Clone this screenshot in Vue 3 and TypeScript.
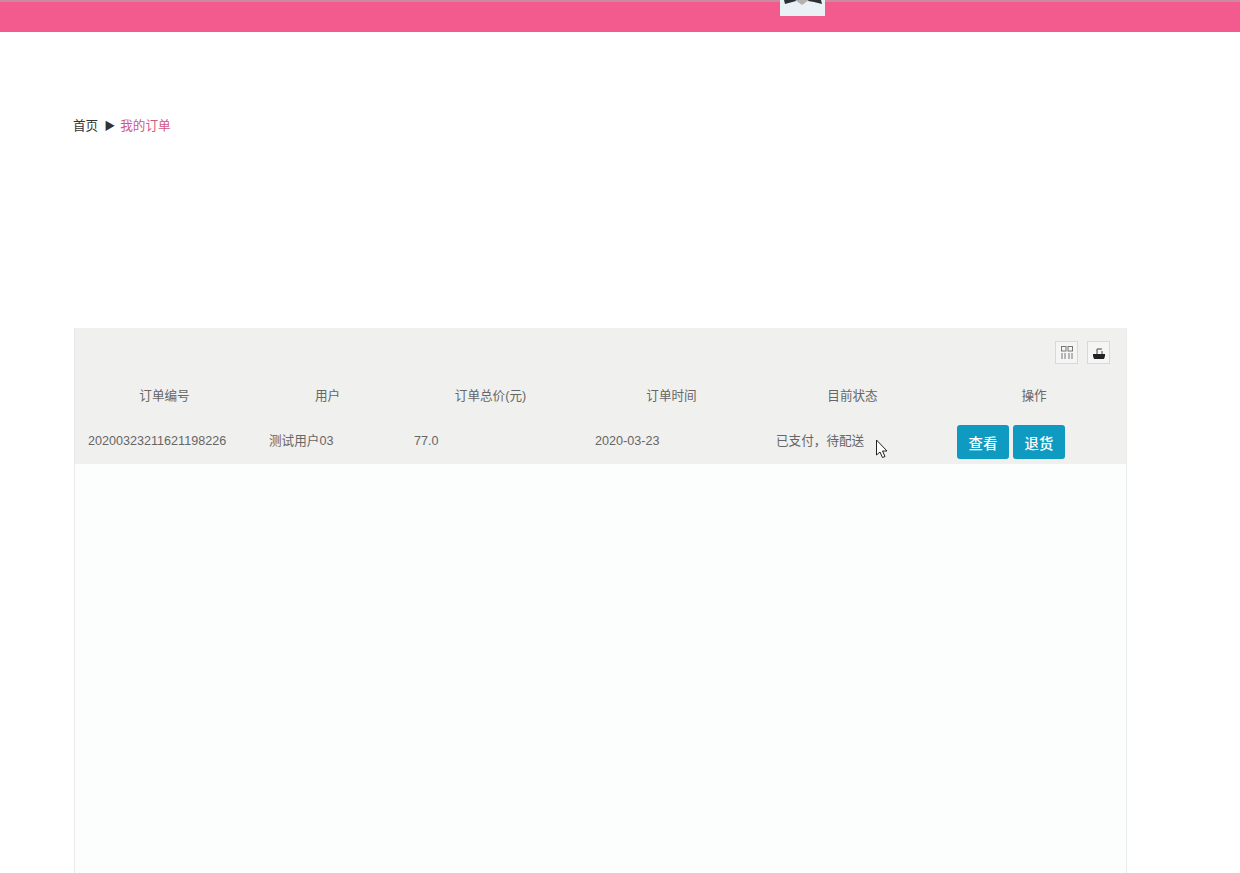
<script setup lang="ts">
const headers = ['订单编号', '用户', '订单总价(元)', '订单时间', '目前状态', '操作']
const cells = ['20200323211621198226', '测试用户03', '77.0', '2020-03-23', '已支付，待配送']
</script>

<template>
  <div class="page">
    <header class="topbar">
      <div class="avatar">
        <svg width="45" height="16" viewBox="0 0 45 16">
          <rect width="45" height="16" fill="#e9f0f6" />
          <path d="M4 0h12v1L5 4z" fill="#2b3036" />
          <path d="M28 0h13l1 4-8-2-6-1z" fill="#2b3036" />
          <path d="M15 0h14l-7 5z" fill="#b4b2ae" />
        </svg>
      </div>
    </header>
    <nav class="crumbs">
      <span>首页</span>
      <span class="arrow">▶</span>
      <span class="current">我的订单</span>
    </nav>
    <section class="panel">
      <div class="toolbar">
        <button class="tool" aria-label="列">
          <svg width="12" height="14" viewBox="0 0 12 14" fill="none" stroke="#777" stroke-width="1">
            <rect x="0.5" y="0.5" width="4.500" height="4.500" />
            <rect x="7" y="0.5" width="4.500" height="4.500" />
            <path d="M1 7v6M4 7v6M8 7v6M11 7v6" />
          </svg>
        </button>
        <button class="tool" aria-label="导出">
          <svg width="14" height="14" viewBox="0 0 14 14">
            <path d="M1 8h12v2l-1 3H2L1 10z" fill="#222" />
            <path d="M5 8V3h5" fill="none" stroke="#444" />
            <path d="M10 8V5" fill="none" stroke="#444" />
          </svg>
        </button>
      </div>
      <div class="grid head">
        <div v-for="h in headers" :key="h" class="th">{{ h }}</div>
      </div>
      <div class="grid row">
        <div v-for="c in cells" :key="c" class="td">{{ c }}</div>
        <div class="td actions">
          <button class="btn">查看</button>
          <button class="btn">退货</button>
        </div>
      </div>
      <svg class="cursor" width="14" height="20" viewBox="0 0 14 20">
        <path d="M1.500 1v15l3.500-3 2.500 5.500 2.500-1-2.500-5.500h4.500z" fill="#fff" stroke="#222" stroke-width="1" />
      </svg>
    </section>
  </div>
</template>

<style>
html, body { background: #fff; }
</style>

<style scoped>
.page {
  height: 873px;
  overflow: hidden;
  background: #fff;
  font-family: "Liberation Sans", "Noto Sans CJK SC", sans-serif;
  font-size: 12.6px;
  line-height: 18px;
  color: #666;
}
.topbar {
  height: 30px;
  border-top: 2px solid #c98aa2;
  background: #f35b8f;
  display: flex;
  padding-left: 780px;
}
.avatar { height: 16px; margin-top: -2px; }
.avatar svg { display: block; }
.crumbs {
  margin: 85px 0 0 73px;
  height: 18px;
  display: flex;
  gap: 6px;
  color: #333;
}
.arrow { width: 10px; font-size: 11px; color: #333; }
.current { color: #cf5a86; }
.panel {
  position: relative;
  margin: 193px 0 0 74px;
  width: 1053px;
  height: 545px;
  background: #fcfefd;
  border-right: 1px solid #eaeaea;
  border-left: 1px solid #eaeaea;
  box-sizing: border-box;
}
.toolbar {
  height: 47px;
  background: #f0f0ef;
  display: flex;
  justify-content: flex-end;
  gap: 9px;
  padding: 13px 16px 0 0;
  box-sizing: border-box;
}
.tool {
  width: 23px;
  height: 23px;
  padding: 0;
  border: 1px solid #d9d9d9;
  background: #f5f5f5;
  display: flex;
  align-items: center;
  justify-content: center;
}
.grid {
  display: grid;
  grid-template-columns: 181px 145px 181px 181px 181px 1fr;
  background: #f0f0ef;
}
.head { height: 38px; align-items: start; }
.th { text-align: center; padding: 12px 2px 0 0; }
.row { height: 51px; align-items: start; }
.td { padding: 19px 0 0 13px; white-space: nowrap; }
.actions { display: flex; gap: 4px; padding-top: 12px; }
.btn {
  width: 52px;
  height: 34px;
  padding: 0;
  border: none;
  border-radius: 3px;
  background: #0f9ac1;
  color: #fff;
  font: 500 14.400px "Liberation Sans", "Noto Sans CJK SC", sans-serif;
}
.cursor { position: absolute; left: 800px; top: 111px; }
</style>
